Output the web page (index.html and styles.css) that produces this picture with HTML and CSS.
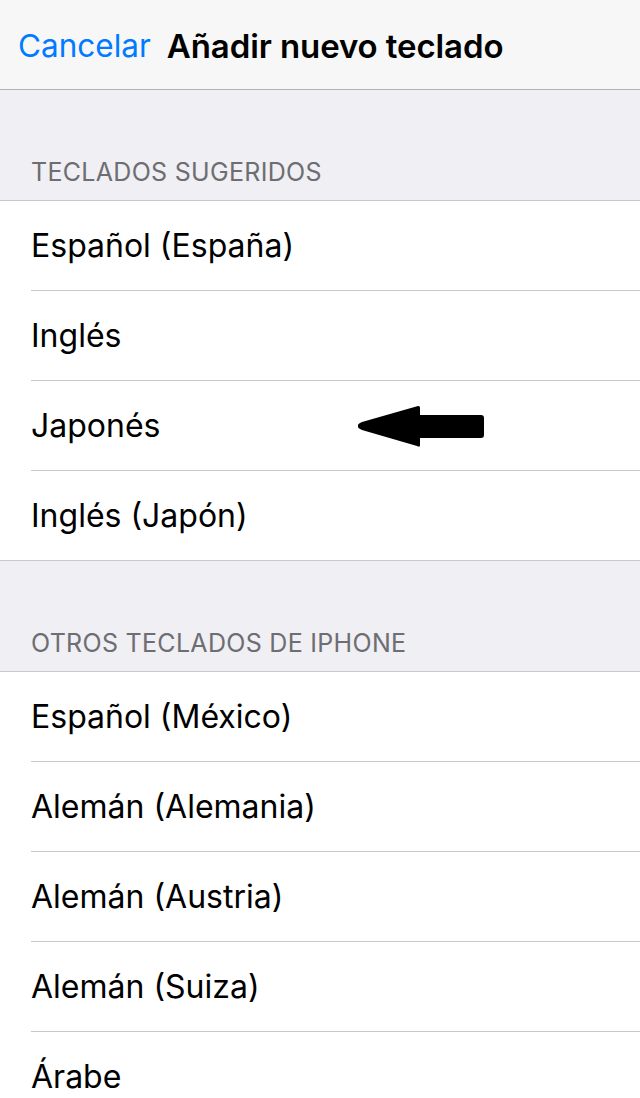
FILE: index.html
```html
<!DOCTYPE html>
<html>
	<head>
		<meta charset="UTF-8">
		<title>Añadir nuevo teclado</title>
		<link rel="stylesheet" href="styles.css">
	</head>
	<body>
		<!--barra de navegación-->
		<div class="navbar">
			<a class="cancel" href="">Cancelar</a>
			<span class="title">Añadir nuevo teclado</span>
		</div>

		<div class="group-header">TECLADOS SUGERIDOS</div>
		<ul class="list">
			<li><span>Español (España)</span></li>
			<li><span>Inglés</span></li>
			<li class="marked">
				<span>Japonés</span>
				<svg class="arrow" width="128" height="42" viewBox="0 0 128 42">
					<path d="M1 19 C1 18 3 17 5 16 L61 0 C63 0 63 1 63 3 L63 9 L124 9 C126 9 127 10 127 12 L127 29 C127 31 126 32 124 32 L63 32 L63 39 C63 41 62 41 60 40 L5 24 C3 23 1 22 1 21 Z" fill="#000"/>
				</svg>
			</li>
			<li><span>Inglés (Japón)</span></li>
		</ul>

		<div class="group-header">OTROS TECLADOS DE IPHONE</div>
		<ul class="list">
			<li><span>Español (México)</span></li>
			<li><span>Alemán (Alemania)</span></li>
			<li><span>Alemán (Austria)</span></li>
			<li><span>Alemán (Suiza)</span></li>
			<li><span>Árabe</span></li>
		</ul>
	</body>
</html>
```

FILE: styles.css
```css
body,ul,li{
	margin: 0;
	padding: 0;
}
li{
	list-style: none;
}
body{
	background: #efeff4;
	font-family: "Inter", "Liberation Sans", sans-serif;
	color: #000;
	overflow: hidden;
}
.navbar{
	display: flex;
	align-items: center;
	gap: 16px;
	height: 90px;
	padding: 2px 18px 0;
	background: #f7f7f7;
	border-bottom: 1px solid #b2b2b2;
	box-sizing: border-box;
}
.cancel{
	color: #007aff;
	font-size: 31.5px;
	text-decoration: none;
}
.title{
	font-size: 33px;
	font-weight: 600;
	letter-spacing: -0.1px;
}
.group-header{
	height: 110px;
	padding: 0 31px 13px;
	box-sizing: border-box;
	display: flex;
	align-items: flex-end;
	font-size: 25px;
	color: #6d6d72;
	letter-spacing: 0.3px;
}
.list{
	background: #fff;
	border-top: 1px solid #c8c7cc;
	border-bottom: 1px solid #c8c7cc;
}
.list li{
	display: flex;
	align-items: center;
	height: 90px;
	margin-left: 31px;
	border-bottom: 1px solid #c8c7cc;
	box-sizing: border-box;
	font-size: 32px;
}
.list li:last-child{
	border-bottom: none;
	height: 89px;
}
.list li.marked{
	position: relative;
}
/*flecha que señala la fila*/
.arrow{
	position: absolute;
	left: 326px;
	top: 25px;
}
```
